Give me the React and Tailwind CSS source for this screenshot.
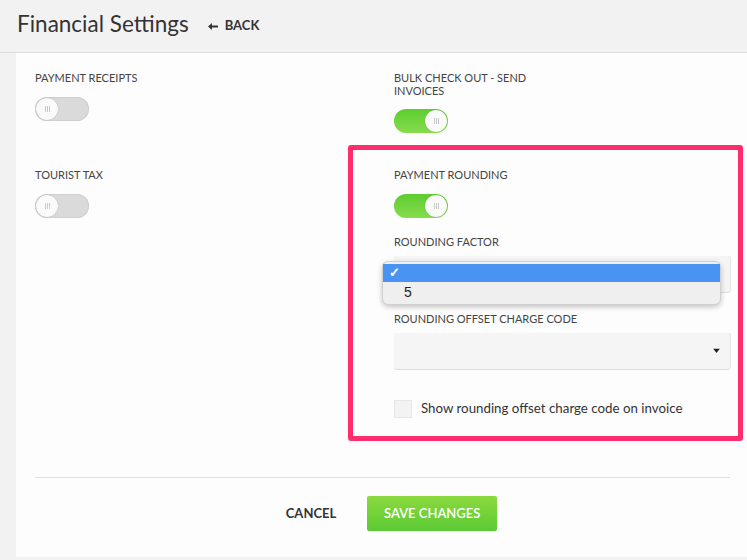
import React from "react";

const font = { fontFamily: "Lato, 'Open Sans', sans-serif" };

const Toggle = ({ on }) => (
  <div
    className={
      "relative h-[24px] w-[54px] rounded-full " +
      (on
        ? "bg-gradient-to-b from-[#5ccd30] to-[#86dc4c]"
        : "bg-[#dadada] shadow-[inset_0_0_0_1px_#cfcfcf]")
    }
  >
    <div
      className={
        "absolute top-[1px] flex h-[22px] w-[22px] items-center justify-center rounded-full bg-[#fafafa] shadow-[0_0_1px_rgba(0,0,0,0.3)] " +
        (on ? "right-[1px]" : "left-[1px]")
      }
    >
      <div className="flex gap-[1px]">
        <span className="h-[6px] w-[1px] bg-[#c9c9c9]" />
        <span className="h-[6px] w-[1px] bg-[#c9c9c9]" />
        <span className="h-[6px] w-[1px] bg-[#c9c9c9]" />
      </div>
    </div>
  </div>
);

const Label = ({ children, className = "" }) => (
  <div className={"text-[11px] uppercase leading-[13px] text-[#444] " + className}>
    {children}
  </div>
);

const Caret = () => (
  <svg width="7" height="5" viewBox="0 0 7 5" className="absolute right-[10px] top-1/2 -translate-y-1/2">
    <path d="M0 0h7L3.5 4.5z" fill="#222" />
  </svg>
);

export default function App() {
  return (
    <div className="min-h-[560px] bg-[#f2f2f2]" style={font}>
      {/* header */}
      <div className="flex h-[53px] items-center border-b border-[#dcdcdc] pl-[17px]">
        <h1 className="text-[22.5px] text-[#333] leading-none -mt-[3px]">Financial Settings</h1>
        <div className="ml-[19px] flex items-center gap-[7px] text-[13px] font-bold text-[#333]">
          <svg width="10" height="7" viewBox="0 0 10 7">
            <path d="M0 3.5L4 0v2.5h6v2H4V7z" fill="#333" />
          </svg>
          <span>BACK</span>
        </div>
      </div>

      {/* panel */}
      <div className="ml-[16px] bg-[#fdfdfd] pb-[26px] pl-[19px] pr-[17px] pt-[18px]">
        <div className="grid grid-cols-[359px_1fr]">
          {/* row 1 */}
          <div>
            <Label>Payment receipts</Label>
            <div className="mt-[13px]">
              <Toggle on={false} />
            </div>
          </div>
          <div className="pb-[12px]">
            <Label className="w-[160px]">Bulk check out - send invoices</Label>
            <div className="mt-[12px]">
              <Toggle on />
            </div>
          </div>

          {/* row 2 */}
          <div className="pt-[23px]">
            <Label>Tourist tax</Label>
            <div className="mt-[13px]">
              <Toggle on={false} />
            </div>
          </div>
          <div className="-ml-[46px] -mr-[13px] rounded-[3px] border-[5px] border-[#ff2d6b] pb-[17px] pl-[41px] pr-[8px] pt-[18px]">
            <Label>Payment rounding</Label>
            <div className="mt-[13px]">
              <Toggle on />
            </div>

            <Label className="mt-[17px]">Rounding factor</Label>
            <div className="relative mt-[8px] h-[36px] rounded-[2px] bg-[#f5f5f5] shadow-[0_1px_0_#dddddd,1px_0_0_#e6e6e6]">
              <div className="absolute -left-[11px] top-[6px] z-10 w-[337px] rounded-[5px] bg-[#efefef] pb-[2px] pt-[2px] shadow-[0_2px_6px_rgba(0,0,0,0.3)] ring-1 ring-[#d0d0d0]">
                <div className="flex h-[18px] items-center bg-[#4a93f3] pl-[6px] text-[13px] font-bold text-white">
                  ✓
                </div>
                <div
                  className="flex h-[20px] items-center pl-[21px] text-[14px] text-[#222]"
                  style={{ fontFamily: "'Liberation Sans', Arial, sans-serif" }}
                >
                  5
                </div>
              </div>
            </div>

            <Label className="mt-[20px]">Rounding offset charge code</Label>
            <div className="relative mt-[8px] h-[36px] rounded-[2px] bg-[#f5f5f5] shadow-[0_1px_0_#dddddd,1px_0_0_#e6e6e6]">
              <Caret />
            </div>

            <div className="mt-[30px] flex items-center gap-[9px]">
              <div className="h-[18px] w-[18px] bg-[#f3f3f3] shadow-[inset_0_0_0_1px_#e6e6e6]" />
              <span className="text-[13.3px] text-[#333]">Show rounding offset charge code on invoice</span>
            </div>
          </div>
        </div>

        {/* footer */}
        <div className="mt-[36px] h-px bg-[#dedede]" />
        <div className="mt-[18px] flex items-center justify-center gap-[31px] pl-[18px]">
          <button className="text-[13px] font-bold text-[#333]">CANCEL</button>
          <button className="h-[35px] w-[130px] rounded-[2px] bg-gradient-to-b from-[#8ada3e] to-[#5bc935] text-[13px] font-semibold text-white">
            SAVE CHANGES
          </button>
        </div>
      </div>
    </div>
  );
}
